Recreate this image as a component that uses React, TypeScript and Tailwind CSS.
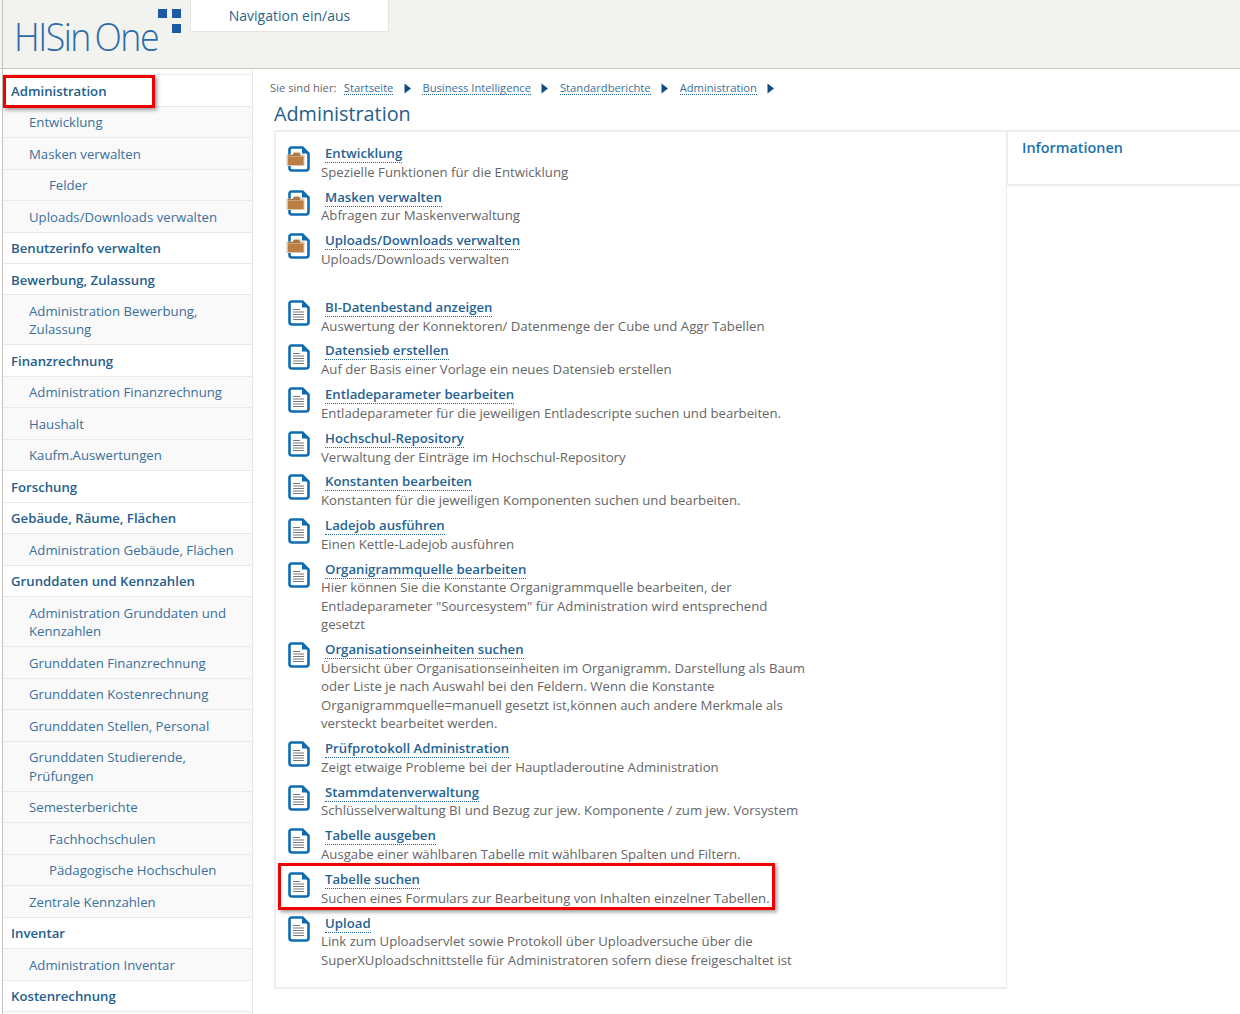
const navItems: { label: string; level: number }[] = [
  { label: "Administration", level: 0 },
  { label: "Entwicklung", level: 1 },
  { label: "Masken verwalten", level: 1 },
  { label: "Felder", level: 2 },
  { label: "Uploads/Downloads verwalten", level: 1 },
  { label: "Benutzerinfo verwalten", level: 0 },
  { label: "Bewerbung, Zulassung", level: 0 },
  { label: "Administration Bewerbung, Zulassung", level: 1 },
  { label: "Finanzrechnung", level: 0 },
  { label: "Administration Finanzrechnung", level: 1 },
  { label: "Haushalt", level: 1 },
  { label: "Kaufm.Auswertungen", level: 1 },
  { label: "Forschung", level: 0 },
  { label: "Gebäude, Räume, Flächen", level: 0 },
  { label: "Administration Gebäude, Flächen", level: 1 },
  { label: "Grunddaten und Kennzahlen", level: 0 },
  { label: "Administration Grunddaten und Kennzahlen", level: 1 },
  { label: "Grunddaten Finanzrechnung", level: 1 },
  { label: "Grunddaten Kostenrechnung", level: 1 },
  { label: "Grunddaten Stellen, Personal", level: 1 },
  { label: "Grunddaten Studierende, Prüfungen", level: 1 },
  { label: "Semesterberichte", level: 1 },
  { label: "Fachhochschulen", level: 2 },
  { label: "Pädagogische Hochschulen", level: 2 },
  { label: "Zentrale Kennzahlen", level: 1 },
  { label: "Inventar", level: 0 },
  { label: "Administration Inventar", level: 1 },
  { label: "Kostenrechnung", level: 0 },
];

const folders = [
  { title: "Entwicklung", text: "Spezielle Funktionen für die Entwicklung" },
  { title: "Masken verwalten", text: "Abfragen zur Maskenverwaltung" },
  { title: "Uploads/Downloads verwalten", text: "Uploads/Downloads verwalten" },
];

const reports = [
  { title: "BI-Datenbestand anzeigen", text: "Auswertung der Konnektoren/ Datenmenge der Cube und Aggr Tabellen" },
  { title: "Datensieb erstellen", text: "Auf der Basis einer Vorlage ein neues Datensieb erstellen" },
  { title: "Entladeparameter bearbeiten", text: "Entladeparameter für die jeweiligen Entladescripte suchen und bearbeiten." },
  { title: "Hochschul-Repository", text: "Verwaltung der Einträge im Hochschul-Repository" },
  { title: "Konstanten bearbeiten", text: "Konstanten für die jeweiligen Komponenten suchen und bearbeiten." },
  { title: "Ladejob ausführen", text: "Einen Kettle-Ladejob ausführen" },
  {
    title: "Organigrammquelle bearbeiten",
    text: 'Hier können Sie die Konstante Organigrammquelle bearbeiten, der Entladeparameter "Sourcesystem" für Administration wird entsprechend gesetzt',
  },
  {
    title: "Organisationseinheiten suchen",
    text: "Übersicht über Organisationseinheiten im Organigramm. Darstellung als Baum oder Liste je nach Auswahl bei den Feldern. Wenn die Konstante Organigrammquelle=manuell gesetzt ist,können auch andere Merkmale als versteckt bearbeitet werden.",
  },
  { title: "Prüfprotokoll Administration", text: "Zeigt etwaige Probleme bei der Hauptladeroutine Administration" },
  { title: "Stammdatenverwaltung", text: "Schlüsselverwaltung BI und Bezug zur jew. Komponente / zum jew. Vorsystem" },
  { title: "Tabelle ausgeben", text: "Ausgabe einer wählbaren Tabelle mit wählbaren Spalten und Filtern." },
  { title: "Tabelle suchen", text: "Suchen eines Formulars zur Bearbeitung von Inhalten einzelner Tabellen." },
  {
    title: "Upload",
    text: "Link zum Uploadservlet sowie Protokoll über Uploadversuche über die SuperXUploadschnittstelle für Administratoren sofern diese freigeschaltet ist",
  },
];

const crumbs = ["Startseite", "Business Intelligence", "Standardberichte", "Administration"];

function DocIcon({ folder }: { folder?: boolean }) {
  return (
    <svg width="26" height="28" viewBox="0 0 26 28" className="shrink-0">
      <path
        d="M5.5 2.5h11l6 6v14.500a2.500 2.500 0 0 1-2.500 2.500H6a2.500 2.500 0 0 1-2.500-2.500V4.500a2 2 0 0 1 2-2z"
        fill="#fff"
        stroke="#0f6cb0"
        strokeWidth="2.6"
      />
      <path d="M16 2.500v6h6.500z" fill="#0f6cb0" />
      {folder ? (
        <g>
          <path d="M0.500 9.500h6l1.500-2.500h6l1.500 2.500h3v11.500h-18z" fill="#dcc6ae" />
          <path d="M2 11v-1h4.500l1.500-2h5l1.500 3z" fill="#ad7540" />
          <rect x="2" y="11.500" width="15.500" height="8.500" fill="#bb7e45" />
        </g>
      ) : (
        <g stroke="#777" strokeWidth="1">
          <path d="M7 10.500h7" />
          <path d="M7 13h11" />
          <path d="M7 15.500h11" />
          <path d="M7 18h11" />
          <path d="M7 20.500h11" />
        </g>
      )}
    </svg>
  );
}

function Entry({ title, text, folder }: { title: string; text: string; folder?: boolean }) {
  return (
    <li className="flex pb-[5.450px]">
      <div className="w-[45px] shrink-0 pt-[2.100px] pl-[10px]">
        <DocIcon folder={folder} />
      </div>
      <div className="w-[490px] leading-[18.4px]">
        <a className="ml-[4px] border-b border-dotted border-[#1f6394] text-[13.2px] leading-[15px] font-semibold text-[#1f6394]">
          {title}
        </a>
        <p className="pt-[1.400px] text-[13.2px] text-[#666]">{text}</p>
      </div>
    </li>
  );
}

export default function App() {
  return (
    <div className="relative h-[1014px] w-[1240px] overflow-hidden bg-white font-['Open_Sans',sans-serif]">
      {/* Header */}
      <header className="flex h-[69px] border-b border-[#c9c9c5] bg-[#f2f2ee]">
        <div className="relative ml-[2px] w-[188px] shrink-0 border-l border-[#c8c2bc]">
          <span className="absolute top-[10px] left-[11px] origin-left scale-x-[0.94] text-[38px] leading-[52px] font-light tracking-[-1.6px] whitespace-nowrap text-[#2a6bab]">
            HISin<span className="ml-[5px]">One</span>
          </span>
          <span className="absolute top-[9px] left-[155px] size-[9px] bg-[#1c5aa6]" />
          <span className="absolute top-[9px] left-[169px] size-[9px] bg-[#1c5aa6]" />
          <span className="absolute top-[24px] left-[169px] size-[9px] bg-[#1c5aa6]" />
        </div>
        <button className="h-[32px] w-[199px] border border-t-0 border-[#e4e4e0] bg-white text-[14px] text-[#2b6489]">
          Navigation ein/aus
        </button>
      </header>

      <div className="flex">
        {/* Sidebar */}
        <nav className="ml-[2px] w-[251px] shrink-0 border-r border-l border-r-[#e6e6e6] border-l-[#c8c2bc] pt-[5.100px]">
          <ul className="border-t border-[#eee]">
            {navItems.map((item, i) => (
              <li
                key={i}
                className={
                  item.level === 0
                    ? "border-b border-[#e9e9e9] bg-white pt-[6.500px] pr-3 pb-[5.485px] pl-[8px] text-[13.2px] leading-[18.5px] font-semibold text-[#24608c]"
                    : item.level === 1
                      ? "border-b border-[#e9e9e9] bg-[#f9f9f9] pt-[6.500px] pr-3 pb-[5.485px] pl-[26px] text-[13.2px] leading-[18.5px] text-[#39709b]"
                      : "border-b border-[#e9e9e9] bg-[#f9f9f9] pt-[6.500px] pr-3 pb-[5.485px] pl-[46px] text-[13.2px] leading-[18.5px] text-[#39709b]"
                }
              >
                {item.label}
              </li>
            ))}
            <li className="h-[32px] bg-[#f9f9f9]" />
          </ul>
        </nav>

        {/* Main */}
        <main className="min-w-0 flex-1">
          <div className="flex h-[28px] items-end pb-[2px] pl-[17px] text-[11.2px] leading-[16px] text-[#666]">
            <span className="mr-[7.400px] border-b border-transparent leading-[13px]">Sie sind hier:</span>
            {crumbs.map((c) => (
              <span key={c} className="flex items-center">
                <a className="border-b border-dotted border-[#1f6394] leading-[13px] text-[#39709b]">{c}</a>
                <svg width="8" height="11" viewBox="0 0 8 11" className="mx-[10.500px]">
                  <path d="M0.500 0.500l6.500 5-6.500 5z" fill="#0f4c81" />
                </svg>
              </span>
            ))}
          </div>
          <h1 className="mt-[4px] ml-[21px] h-[29px] text-[19.8px] leading-[26px] text-[#24608c]">Administration</h1>

          <div className="flex">
            <section className="ml-[21px] h-[859px] w-[733px] border-2 border-r-[1px] border-[#eeeeee] pt-[10.900px]">
              <ul className="mb-[23px]">
                {folders.map((f) => (
                  <Entry key={f.title} {...f} folder />
                ))}
              </ul>
              <ul>
                {reports.map((r) => (
                  <Entry key={r.title} {...r} />
                ))}
              </ul>
            </section>
            <aside className="h-[56px] flex-1 border-y-2 border-l border-[#eeeeee] pt-[6px] pl-[14px]">
              <h2 className="text-[14.4px] leading-[20px] font-semibold text-[#1a70b0]">Informationen</h2>
            </aside>
          </div>
        </main>
      </div>

      {/* Red annotation frames */}
      <div className="absolute top-[75px] left-[3px] h-[33px] w-[152px] border-[3px] border-[#f00000] shadow-[2px_2px_4px_rgba(0,0,0,0.4)]" />
      <div className="absolute top-[863px] left-[278px] h-[47px] w-[497px] border-[3px] border-[#f00000] shadow-[2px_2px_4px_rgba(0,0,0,0.4)]" />
    </div>
  );
}
